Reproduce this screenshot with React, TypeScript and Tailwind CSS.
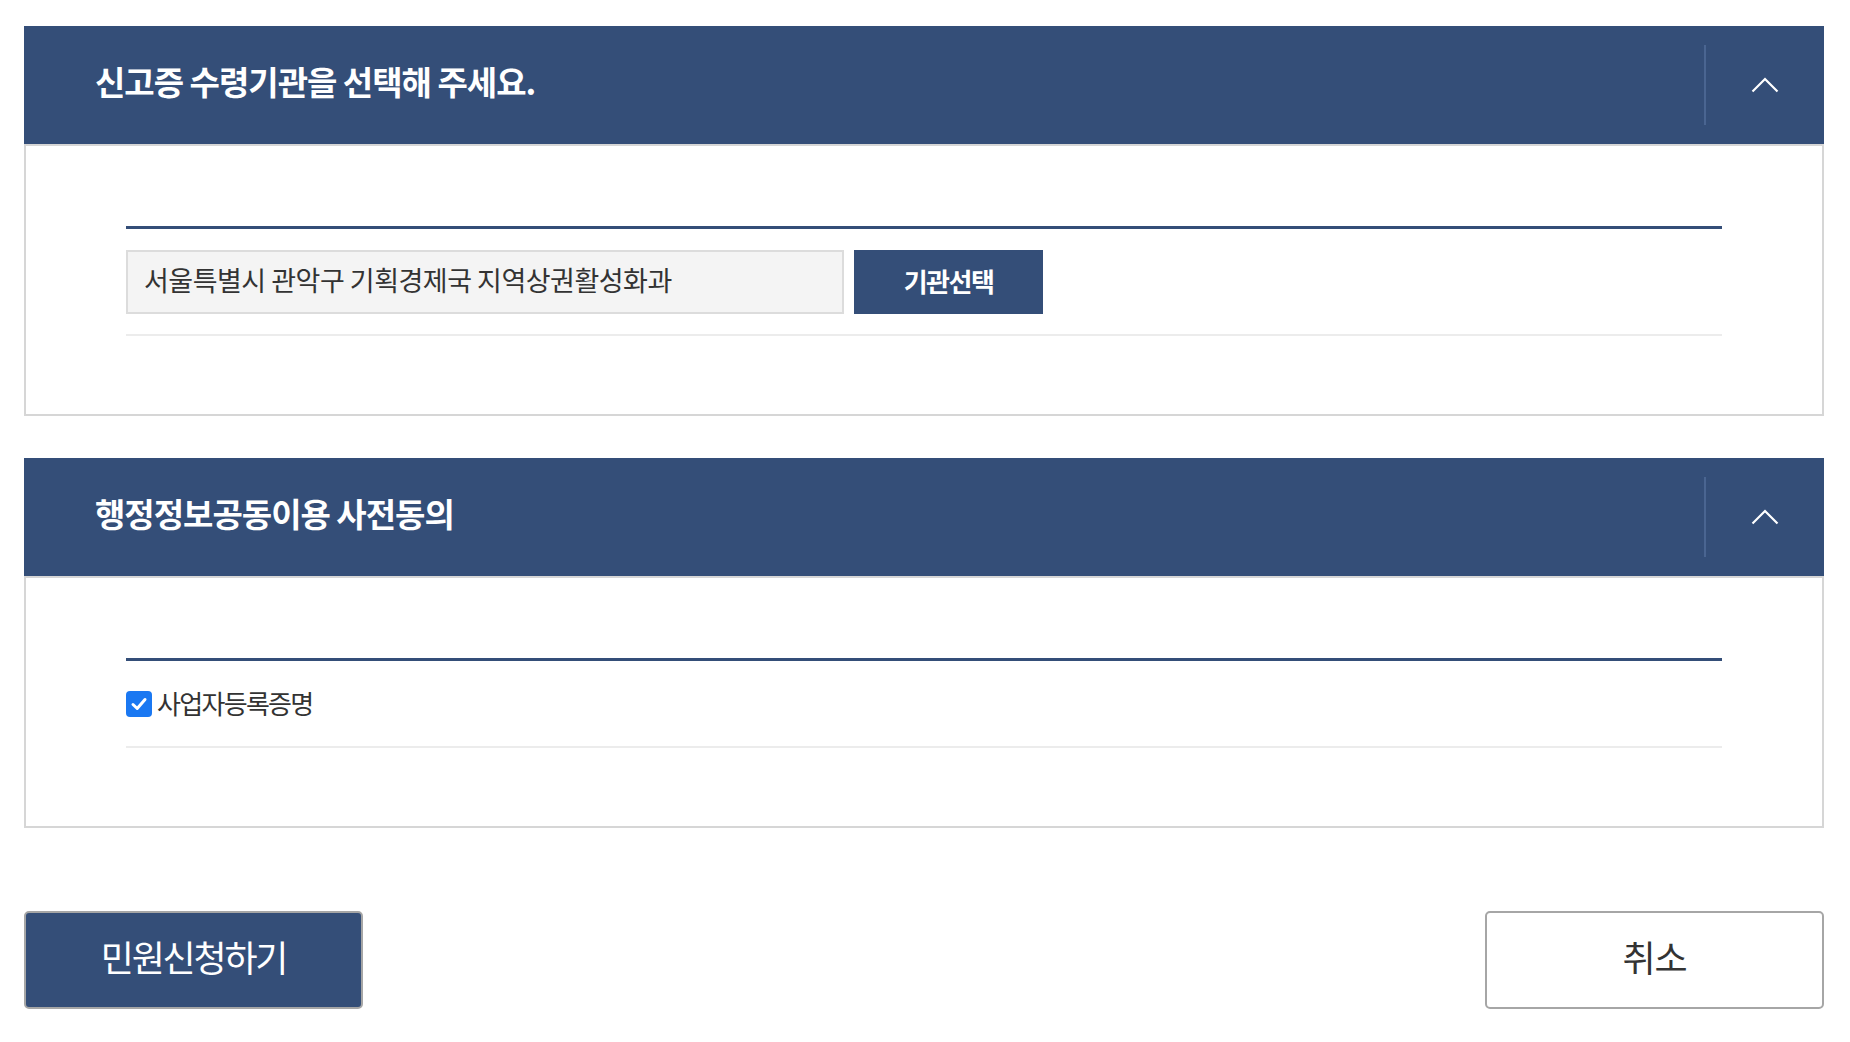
const font = { fontFamily: '"Noto Sans CJK KR", "Noto Sans", sans-serif' };

function ChevronUp() {
  return (
    <svg width="28" height="16" viewBox="0 0 28 16" fill="none">
      <path d="M1.5 14.5 L14 2 L26.5 14.5" stroke="#ffffff" strokeWidth="2.2" />
    </svg>
  );
}

interface PanelProps {
  title: string;
  children: React.ReactNode;
}

function Panel({ title, children }: PanelProps) {
  return (
    <section>
      <div className="flex h-[118px] items-center bg-[#344e78]">
        <h2 className="pb-[6px] pl-[71px] text-[33px] font-bold tracking-[-1px] text-white">
          {title}
        </h2>
        <div className="ml-auto h-[80px] w-[2px] bg-[#4a6591]" />
        <button className="flex h-full w-[118px] items-center justify-center">
          <ChevronUp />
        </button>
      </div>
      <div className="border-2 border-[#d6d6d6] px-[100px] pb-[78px] pt-[80px]">
        <div className="border-t-[3px] border-[#344e78]" />
        {children}
        <div className="h-[2px] bg-[#ececec]" />
      </div>
    </section>
  );
}

function CheckBox() {
  return (
    <span className="flex h-[26px] w-[26px] items-center justify-center rounded-[4px] bg-[#1a78f2]">
      <svg width="18" height="18" viewBox="0 0 18 18" fill="none">
        <path
          d="M3 9.5 L7.2 13.5 L15 4.5"
          stroke="#ffffff"
          strokeWidth="3"
          strokeLinecap="round"
          strokeLinejoin="round"
        />
      </svg>
    </span>
  );
}

export default function App() {
  return (
    <div className="min-h-screen bg-white" style={font}>
      <div className="ml-[24px] w-[1800px] pt-[26px]">
        <Panel title="신고증 수령기관을 선택해 주세요.">
          <div className="flex items-center gap-[10px] pb-[20px] pt-[21px]">
            <div className="flex h-[64px] w-[718px] items-center border-2 border-[#dcdcdc] bg-[#f4f4f4] pb-[3px] pl-[16px] text-[27px] tracking-[-0.5px] text-[#333333]">
              서울특별시 관악구 기획경제국 지역상권활성화과
            </div>
            <button className="flex h-[64px] w-[189px] items-center justify-center bg-[#344e78] pb-[3px] text-[26px] font-bold tracking-[-1.5px] text-white">
              기관선택
            </button>
          </div>
        </Panel>

        <div className="h-[42px]" />

        <Panel title="행정정보공동이용 사전동의">
          <div className="flex h-[85px] items-center gap-[5px]">
            <CheckBox />
            <span className="pb-[3px] text-[26px] tracking-[-1.7px] text-[#333333]">사업자등록증명</span>
          </div>
        </Panel>

        <div className="flex justify-between pt-[83px]">
          <button className="flex h-[98px] w-[339px] items-center justify-center rounded-[5px] border-2 border-[#a6a6a6] bg-[#344e78] pb-[8px] text-[36px] tracking-[-2.2px] text-white">
            민원신청하기
          </button>
          <button className="flex h-[98px] w-[339px] items-center justify-center rounded-[5px] border-2 border-[#a6a6a6] bg-white pb-[8px] text-[36px] tracking-[-1px] text-[#333333]">
            취소
          </button>
        </div>
      </div>
    </div>
  );
}
